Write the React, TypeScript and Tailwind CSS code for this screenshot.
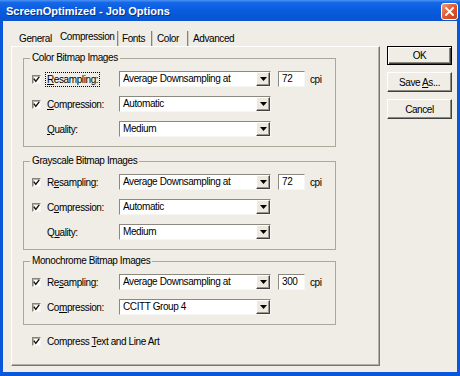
import React from "react";

function Check() {
  return (
    <span className="flex h-[9px] w-[9px] items-center justify-center border-t border-l border-t-[#85837a] border-l-[#85837a] border-b border-r border-b-[#f4f4f0] border-r-[#f4f4f0] bg-white shadow-[inset_1px_1px_0_#b8b6ac]">
      <svg width="7" height="7" viewBox="0 0 7 7">
        <path d="M0.8 2.6 L2.8 5.4 L6.2 0.8" fill="none" stroke="#111" strokeWidth="1.4" />
      </svg>
    </span>
  );
}

function Select({ value }: { value: string }) {
  return (
    <div className="flex h-[16px] w-[152px] border-t border-l border-t-[#8a887f] border-l-[#8a887f] border-b border-r border-b-[#f6f6f2] border-r-[#f6f6f2] bg-white">
      <span className="flex-1 overflow-hidden whitespace-nowrap pl-[3px] leading-[14px]">{value}</span>
      <span className="flex h-[14px] w-[14px] items-center justify-center border-l border-t border-l-white border-t-white border-r border-b border-r-[#404040] border-b-[#404040] bg-[#ece9df] shadow-[inset_-1px_-1px_0_#9a988e]">
        <svg width="7" height="4" viewBox="0 0 7 4">
          <path d="M0 0 H7 L3.5 4 Z" fill="#000" />
        </svg>
      </span>
    </div>
  );
}

function Input({ value }: { value: string }) {
  return (
    <div className="h-[16px] w-[27px] border-t border-l border-t-[#8a887f] border-l-[#8a887f] border-b border-r border-b-[#f6f6f2] border-r-[#f6f6f2] bg-white pl-[3px] leading-[14px]">
      {value}
    </div>
  );
}

function Row({
  checked,
  label,
  value,
  dpi,
  focus,
}: {
  checked: boolean;
  label: React.ReactNode;
  value: string;
  dpi?: string;
  focus?: boolean;
}) {
  return (
    <div className="flex h-[16px] items-center">
      <div className="w-[15px]">{checked ? <Check /> : null}</div>
      <div className="w-[72px]">
        {focus ? (
          <span className="-ml-[2px] border border-dotted border-black px-[1px] py-[1px] leading-[11px]">{label}</span>
        ) : (
          <span>{label}</span>
        )}
      </div>
      <Select value={value} />
      {dpi ? (
        <>
          <div className="ml-[7px]">
            <Input value={dpi} />
          </div>
          <span className="ml-[5px]">cpi</span>
        </>
      ) : null}
    </div>
  );
}

function Group({
  title,
  children,
  className,
}: {
  title: string;
  children: React.ReactNode;
  className?: string;
}) {
  return (
    <fieldset className={"w-[313px] border border-[#a9a89b] px-0 pt-[7px] pb-[9px] " + (className ?? "")}>
      <legend className="ml-[6px] px-[2px] leading-[12px]">{title}</legend>
      <div className="flex flex-col gap-[9px] pl-[8px]">{children}</div>
    </fieldset>
  );
}

function U({ children }: { children: React.ReactNode }) {
  return <span className="underline underline-offset-[1px]">{children}</span>;
}

function Sep() {
  return <span className="h-[15px] w-[2px] border-l border-l-[#85837a] border-r border-r-[#d0cec3]" />;
}

function Button({ children, def }: { children: React.ReactNode; def?: boolean }) {
  return def ? (
    <div className="flex h-[19px] w-[65px] items-center justify-center border border-black shadow-[inset_1px_1px_0_#ffffff,inset_-1px_-1px_0_#404040,inset_-2px_-2px_0_#8a887f]">
      {children}
    </div>
  ) : (
    <div className="flex h-[20px] w-[65px] items-center justify-center border-t border-l border-t-white border-l-white border-r border-b border-r-[#404040] border-b-[#404040] shadow-[inset_-1px_-1px_0_#8a887f]">
      {children}
    </div>
  );
}

export default function App() {
  return (
    <div className="flex h-[376px] w-[460px] flex-col bg-[#0b57dc] font-['Liberation_Sans',Arial,sans-serif] text-[10px] tracking-[-0.4px] text-black">
      <div className="flex h-[21px] items-center justify-between bg-[linear-gradient(180deg,#4a94f5_0%,#1668e8_12%,#0a5de0_45%,#0756d6_80%,#0a55d0_100%)] pl-[6px] pr-[2px] pt-[1px]">
        <span className="text-[11px] font-bold tracking-normal text-white [text-shadow:1px_1px_0_#0a2f86]">
          ScreenOptimized - Job Options
        </span>
        <div className="flex h-[17px] w-[17px] items-center justify-center rounded-[3px] border border-white bg-[linear-gradient(135deg,#ee9a7c_0%,#e0582f_50%,#c8401a_100%)]">
          <svg width="9" height="9" viewBox="0 0 9 9">
            <path d="M1 1 L8 8 M8 1 L1 8" stroke="#fff" strokeWidth="1.8" strokeLinecap="square" />
          </svg>
        </div>
      </div>

      <div className="mx-[3px] mb-[4px] flex flex-1 bg-[#efede5]">
        <div className="flex w-[377px] flex-col pl-[8px] pt-[6px] pb-[6px]">
          <div className="flex h-[19px] items-end">
            <span className="flex h-[16px] w-[46px] items-center pl-[8px]">General</span>
            <span className="flex h-[19px] w-[60px] items-center pl-[3px] pb-[1px]">Compression</span>
            <Sep />
            <span className="flex h-[16px] w-[32px] items-center pl-[3px]">Fonts</span>
            <Sep />
            <span className="flex h-[16px] w-[34px] items-center pl-[4px]">Color</span>
            <Sep />
            <span className="flex h-[16px] items-center pl-[4px]">Advanced</span>
          </div>
          <div className="flex flex-1 flex-col border-t border-l border-t-white border-l-white border-r border-b border-r-[#77756c] border-b-[#77756c] pl-[11px] pt-[5px] shadow-[inset_-1px_-1px_0_#b3b1a6]">
            <Group title="Color Bitmap Images">
              <Row checked focus label={<><U>R</U>esampling:</>} value="Average Downsampling at" dpi="72" />
              <Row checked label={<><U>C</U>ompression:</>} value="Automatic" />
              <Row checked={false} label={<><U>Q</U>uality:</>} value="Medium" />
            </Group>
            <Group title="Grayscale Bitmap Images" className="mt-[8px]">
              <Row checked label={<>R<U>e</U>sampling:</>} value="Average Downsampling at" dpi="72" />
              <Row checked label={<>C<U>o</U>mpression:</>} value="Automatic" />
              <Row checked={false} label={<>Q<U>u</U>ality:</>} value="Medium" />
            </Group>
            <Group title="Monochrome Bitmap Images" className="mt-[5px]">
              <Row checked label={<>Re<U>s</U>ampling:</>} value="Average Downsampling at" dpi="300" />
              <Row checked label={<>Co<U>m</U>pression:</>} value="CCITT Group 4" />
            </Group>
            <div className="mt-[8px] flex h-[16px] items-center pl-[9px]">
              <Check />
              <span className="ml-[6px]">
                Compress <U>T</U>ext and Line Art
              </span>
            </div>
          </div>
        </div>
        <div className="flex flex-col pl-[7px] pt-[25px]">
          <Button def>OK</Button>
          <div className="mt-[7px]">
            <Button>
              <span>
                Save <U>A</U>s...
              </span>
            </Button>
          </div>
          <div className="mt-[7px]">
            <Button>Cancel</Button>
          </div>
        </div>
      </div>
    </div>
  );
}
